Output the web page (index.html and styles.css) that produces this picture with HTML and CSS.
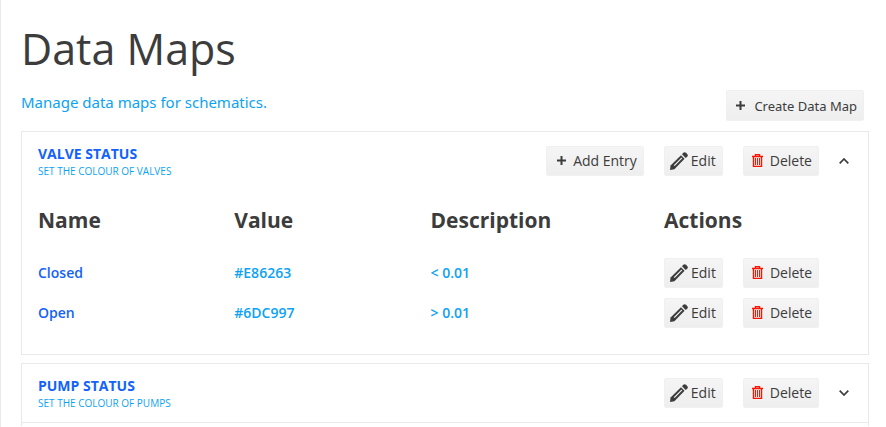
FILE: index.html
```html
<!DOCTYPE html>
<html lang="en">
<head>
  <meta charset="UTF-8">
  <title>Data Maps</title>
  <meta name="viewport" content="width=device-width, initial-scale=1">
  <link rel="stylesheet" href="styles.css">
</head>
<body>

  <!-- Shared icons -->
  <svg class="icon-defs" aria-hidden="true">
    <symbol id="icon-plus" viewBox="0 0 9 9">
      <path d="M4.5 0V9M0 4.5H9" fill="none" stroke="currentColor" stroke-width="2"/>
    </symbol>
    <symbol id="icon-pencil" viewBox="0 0 18 18">
      <path d="M0 18L0.600 13.500L11 3.200L14.600 6.800L4.400 17.200Z" fill="currentColor"/>
      <path d="M12 2.200L13.300 0.800Q14.600-0.400 16 0.800L17.200 2Q18.400 3.400 17.200 4.700L15.700 5.900Z" fill="currentColor"/>
      <path d="M4.200 13.600L11.900 5.900" fill="none" stroke="#f2f2f2" stroke-width="1.200"/>
    </symbol>
    <symbol id="icon-trash" viewBox="0 0 11 13">
      <path d="M0 2.500H11M3.500 2.500V0.600H7.500V2.500M1.500 3V12.400H9.500V3" fill="none" stroke="currentColor" stroke-width="1.400"/>
      <path d="M3.500 4V11M5.500 4V11M7.500 4V11" fill="none" stroke="currentColor" stroke-width="1"/>
    </symbol>
    <symbol id="icon-chevron" viewBox="0 0 10 6">
      <path d="M0.700 5.300L5 1L9.300 5.300" fill="none" stroke="currentColor" stroke-width="1.7"/>
    </symbol>
  </svg>

  <main class="page">
    <h1>Data Maps</h1>
    <div class="intro">
      <p>Manage data maps for schematics.</p>
      <button class="btn btn-create"><svg class="plus"><use href="#icon-plus"/></svg>Create Data Map</button>
    </div>

    <section class="panel">
      <div class="panel-header">
        <div class="panel-title">
          <h2>VALVE STATUS</h2>
          <p>SET THE COLOUR OF VALVES</p>
        </div>
        <div class="actions">
          <button class="btn btn-add"><svg class="plus"><use href="#icon-plus"/></svg>Add Entry</button>
          <button class="btn btn-edit"><svg class="pencil"><use href="#icon-pencil"/></svg>Edit</button>
          <button class="btn btn-delete"><svg class="trash"><use href="#icon-trash"/></svg>Delete</button>
          <button class="toggle open" aria-label="Collapse"><svg class="chevron"><use href="#icon-chevron"/></svg></button>
        </div>
      </div>
      <table class="entries">
        <thead>
          <tr>
            <th class="col-name">Name</th>
            <th class="col-value">Value</th>
            <th class="col-desc">Description</th>
            <th>Actions</th>
          </tr>
        </thead>
        <tbody>
          <tr>
            <td class="name">Closed</td>
            <td>#E86263</td>
            <td>&lt; 0.01</td>
            <td>
              <div class="actions">
                <button class="btn btn-edit"><svg class="pencil"><use href="#icon-pencil"/></svg>Edit</button>
                <button class="btn btn-delete"><svg class="trash"><use href="#icon-trash"/></svg>Delete</button>
              </div>
            </td>
          </tr>
          <tr>
            <td class="name">Open</td>
            <td>#6DC997</td>
            <td>&gt; 0.01</td>
            <td>
              <div class="actions">
                <button class="btn btn-edit"><svg class="pencil"><use href="#icon-pencil"/></svg>Edit</button>
                <button class="btn btn-delete"><svg class="trash"><use href="#icon-trash"/></svg>Delete</button>
              </div>
            </td>
          </tr>
        </tbody>
      </table>
    </section>

    <section class="panel">
      <div class="panel-header">
        <div class="panel-title">
          <h2>PUMP STATUS</h2>
          <p>SET THE COLOUR OF PUMPS</p>
        </div>
        <div class="actions">
          <button class="btn btn-edit"><svg class="pencil"><use href="#icon-pencil"/></svg>Edit</button>
          <button class="btn btn-delete"><svg class="trash"><use href="#icon-trash"/></svg>Delete</button>
          <button class="toggle" aria-label="Expand"><svg class="chevron"><use href="#icon-chevron"/></svg></button>
        </div>
      </div>
      <div class="panel-rest"></div>
    </section>
  </main>

</body>
</html>
```
FILE: styles.css
```css
* { box-sizing: border-box; margin: 0; padding: 0; }

body {
  font-family: "Open Sans", "Noto Sans", sans-serif;
  font-size: 14px;
  line-height: 20px;
  color: #3c3c3c;
  background: #fff;
  min-height: 100vh;
  border-left: 1px solid #e9e9e9;
}

.icon-defs { display: none; }

.page { padding: 20px 17px 0 20px; }

h1 {
  font-size: 43px;
  font-weight: 400;
  line-height: 58px;
}

.intro {
  display: flex;
  justify-content: space-between;
  padding: 12px 5px 10px 0;
}
.intro p {
  font-family: "Noto Sans", sans-serif;
  font-size: 15px;
  line-height: 24px;
  color: #0ca2f5;
}

.btn {
  display: flex;
  align-items: center;
  height: 30px;
  padding: 0 6px 1px;
  border: 1px solid #f0f0f0;
  border-radius: 2px;
  background: linear-gradient(#f5f5f5, #eee);
  color: #3c3c3c;
  font-family: inherit;
  font-size: 14px;
  line-height: 20px;
  white-space: nowrap;
  cursor: pointer;
}
.btn:hover { background: #e8e8e8; }

.btn-create {
  height: 31px;
  padding: 0 6px 0 9px;
  font-size: 13px;
  font-family: "Noto Sans", sans-serif;
}
.btn-add { padding-left: 10px; }
.btn-edit { padding-left: 5px; }
.btn-delete { padding-left: 8px; }

.plus { width: 9px; height: 9px; margin-right: 7px; }
.btn-create .plus { margin-right: 9px; }
.pencil { width: 18px; height: 18px; margin-right: 3px; }
.trash { width: 11px; height: 13px; margin-right: 7px; color: #fa1500; }
.chevron { display: block; width: 10px; height: 6px; }

.panel {
  border: 1px solid #e9e9e9;
  margin-bottom: 8px;
}
.panel:last-child {
  border-bottom: none;
  margin-bottom: 0;
}

.panel-header {
  display: flex;
  justify-content: space-between;
  align-items: center;
  height: 58px;
  padding: 0 16px;
}
.panel-title h2 {
  font-size: 14px;
  font-weight: 700;
  line-height: 20px;
  color: #1262fb;
}
.panel-title p {
  font-size: 10px;
  line-height: 14px;
  color: #0ca2f5;
}

.actions {
  display: flex;
  align-items: center;
  gap: 20px;
}

.toggle {
  padding: 6px 3px;
  margin-left: -3px;
  border: none;
  background: none;
  color: #3c3c3c;
  transform: rotate(180deg);
  cursor: pointer;
}
.toggle.open { transform: none; }

.entries {
  width: 100%;
  border-collapse: collapse;
  table-layout: fixed;
  margin-bottom: 21px;
}
.entries th {
  height: 63px;
  padding: 0 0 4px 16px;
  font-size: 21px;
  font-weight: 700;
  line-height: 30px;
  text-align: left;
}
.entries td {
  height: 40px;
  padding-left: 16px;
  font-weight: 600;
  color: #0ca2f5;
}
.entries .name { color: #1262fb; }
.entries .btn { font-weight: 400; }
.col-name, .col-value { width: 23.2%; }
.col-desc { width: 27.6%; }

.panel-rest {
  height: 4px;
  border-top: 1px solid #e9e9e9;
}
```
